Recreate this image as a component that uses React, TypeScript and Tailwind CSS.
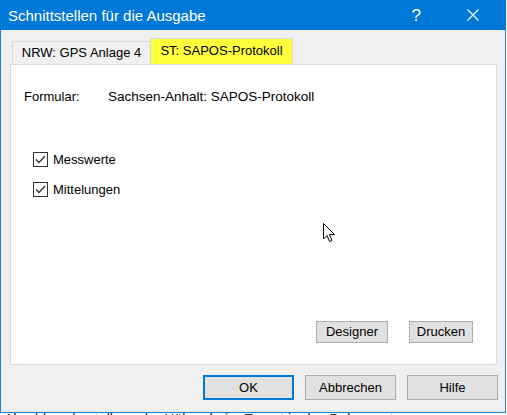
import React from "react";

const font = { fontFamily: '"Liberation Sans", Arial, sans-serif' };

function Check({ label }: { label: string }) {
  return (
    <div className="flex items-center h-[16px]">
      <div className="w-[15px] h-[15px] border border-[#333333] bg-white flex items-center justify-center">
        <svg width="11" height="11" viewBox="0 0 11 11">
          <path d="M1 5.5 L4 8.5 L10 2" fill="none" stroke="#333333" strokeWidth="1.3" />
        </svg>
      </div>
      <span className="ml-[5px] text-[13px] text-black leading-none">{label}</span>
    </div>
  );
}

function Btn({ label, w, h, primary }: { label: string; w: string; h: string; primary?: boolean }) {
  return (
    <div
      className={`${w} ${h} flex items-center justify-center bg-[#e1e1e1] text-[13px] text-black ${
        primary ? "border-2 border-[#0078d7]" : "border border-[#adadad]"
      }`}
    >
      {label}
    </div>
  );
}

export default function App() {
  return (
    <div className="w-[507px] h-[415px] bg-white overflow-hidden relative" style={font}>
      <div className="w-[506px] h-[413px] border border-[#1a7fd4] bg-[#f0f0f0] flex flex-col">
        {/* Title bar */}
        <div className="h-[30px] bg-[#0078d7] flex items-center text-white -mx-px -mt-px">
          <span className="ml-[8px] text-[15px] leading-none">Schnittstellen für die Ausgabe</span>
          <span className="ml-auto mr-[46px] text-[17px] leading-none font-light">?</span>
          <svg className="mr-[27px]" width="12" height="12" viewBox="0 0 12 12">
            <path d="M0.5 0.5 L11.5 11.5 M11.5 0.5 L0.5 11.5" stroke="white" strokeWidth="1.1" />
          </svg>
        </div>
        {/* Tabs */}
        <div className="ml-[9px] mt-[8px] flex items-end h-[26px]">
          <div className="ml-[2px] w-[138px] h-[23px] border-t border-l border-[#d9d9d9] bg-[#f0f0f0] flex items-center justify-center text-[13px] text-black">
            NRW: GPS Anlage 4
          </div>
          <div className="w-[143px] h-[26px] border-t border-l border-r border-[#d9d9d9] bg-[#ffff3c] flex items-center justify-center text-[13px] text-black pb-[2px]">
            ST: SAPOS-Protokoll
          </div>
        </div>
        {/* Panel */}
        <div className="ml-[9px] w-[487px] h-[301px] bg-white border border-[#dadada] flex flex-col relative">
          <div className="flex items-center mt-[24px] h-[16px] text-[13px] text-black">
            <span className="ml-[13px] w-[84px]">Formular:</span>
            <span className="text-[13.5px]">Sachsen-Anhalt: SAPOS-Protokoll</span>
          </div>
          <div className="ml-[22px] mt-[46px] flex flex-col gap-[14px]">
            <Check label="Messwerte" />
            <Check label="Mittelungen" />
          </div>
          <div className="mt-auto mb-[21px] flex justify-end gap-[21px] mr-[23px]">
            <Btn label="Designer" w="w-[72px]" h="h-[22px]" />
            <Btn label="Drucken" w="w-[64px]" h="h-[22px]" />
          </div>
          <svg className="absolute left-[312px] top-[158px]" width="13" height="20" viewBox="0 0 13 20">
            <path
              d="M0.5 0.5 L0.5 16 L4 12.5 L6.5 18.5 L9 17.5 L6.5 11.5 L11.5 11.5 Z"
              fill="white"
              stroke="black"
              strokeWidth="1"
              strokeLinejoin="round"
            />
          </svg>
        </div>
        {/* Bottom buttons */}
        <div className="mt-[10px] flex justify-end gap-[11px] mr-[7px]">
          <Btn label="OK" w="w-[91px]" h="h-[25px]" primary />
          <Btn label="Abbrechen" w="w-[91px]" h="h-[25px]" />
          <Btn label="Hilfe" w="w-[91px]" h="h-[25px]" />
        </div>
      </div>
      <div className="h-[2px] overflow-hidden">
        <div className="ml-[4px] text-[14px] leading-[14px] text-[#222] mt-[-1px]">
          Abschlussdarstellung der Höhen beim Export in das Dokument
        </div>
      </div>
    </div>
  );
}
